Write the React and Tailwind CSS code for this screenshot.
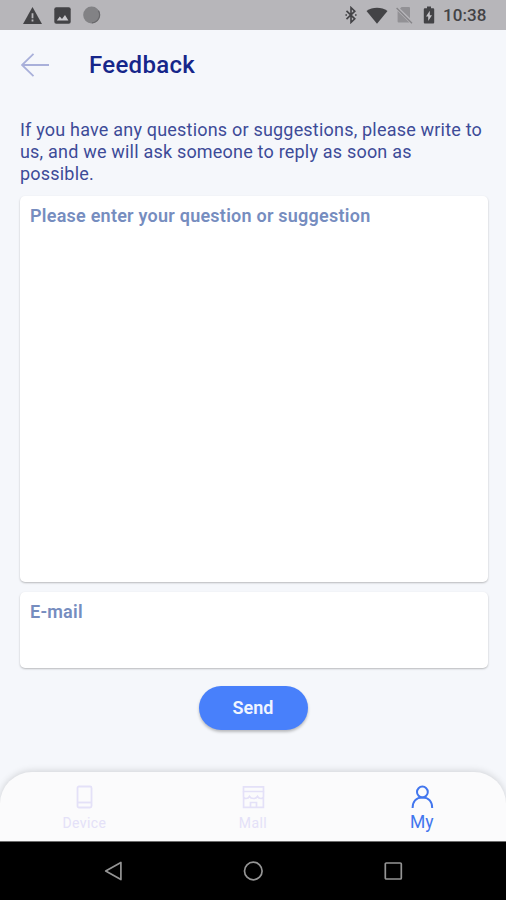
const StatusBar = () => (
  <div className="flex h-[30px] shrink-0 items-center justify-between bg-[#b7b6ba] pl-[23px] pr-[19px] text-[#434346]">
    <div className="flex items-center">
      <svg className="h-[17px] w-[19px]" viewBox="0 0 19 17" fill="currentColor">
        <path d="M9.5 0 L19 17 H0 Z" />
        <path d="M8.6 6.2h1.8v5H8.6zM8.6 12.6h1.8v1.8H8.6z" fill="#b7b6ba" />
      </svg>
      <svg className="ml-3 h-[17px] w-[17px]" viewBox="0 0 17 17">
        <rect x="0.3" y="0.3" width="16.4" height="16.4" rx="2" fill="currentColor" />
        <path d="M2.8 13.5 L5.8 9.4 L8 12 L11 8 L14.4 13.5 Z" fill="#c9c8cc" />
      </svg>
      <svg className="ml-3 h-[18px] w-[18px]" viewBox="0 0 18 18">
        <circle cx="8.6" cy="9" r="8.4" fill="#828285" />
        <path d="M15.4 4.6 A8 8 0 0 1 9 16.8" fill="none" stroke="#68686b" strokeWidth="1.2" />
      </svg>
    </div>
    <div className="flex items-center">
      <svg className="h-[18px] w-3" viewBox="0 0 12 18" fill="none" stroke="currentColor" strokeWidth="1.6">
        <path d="M1.5 4.8 L9.8 12.8 L6 16.4 V1.6 L9.8 5.2 L1.5 13.2" />
        <path d="M1.2 8.2v1.6M10.8 8.2v1.6" />
      </svg>
      <svg className="ml-[9px] h-[17px] w-[22px]" viewBox="0 0 22 17" fill="currentColor">
        <path d="M0.5 4 C6.5 -0.4 15.5 -0.4 21.5 4 L11 16.8 Z" />
      </svg>
      <svg className="ml-2 h-[18px] w-[17px]" viewBox="0 0 17 18">
        <path d="M5.6 1 H13 Q14 1 14 2 V12.2 L4 2.6 Z M1.6 5 L13.4 16.4 H2.6 Q1.6 16.4 1.6 15.4 Z" fill="#929195" />
        <path d="M0.6 2 L16 17.2" stroke="#858488" strokeWidth="1.3" />
      </svg>
      <svg className="ml-[10px] h-[18px] w-3" viewBox="0 0 12 18">
        <path d="M4 0.4h4v1.8h2.2q1 0 1 1v13.4q0 1-1 1H1.8q-1 0-1-1V3.2q0-1 1-1H4z" fill="currentColor" />
        <path d="M6.8 4.8 L3 10.6 H5.2 V15 L9 9.2 H6.8 Z" fill="#c3c2c6" />
      </svg>
      <span className="ml-2 w-[44px] pt-px whitespace-nowrap text-[17px] leading-none font-medium tracking-[0.1px]">
        10:38
      </span>
    </div>
  </div>
);

const DeviceIcon = () => (
  <svg className="h-6 w-6" viewBox="0 0 24 24" fill="none" stroke="currentColor" strokeWidth="1.8">
    <rect x="5.5" y="1.5" width="14" height="21" rx="1.5" />
    <path d="M5.5 17.5h14" />
  </svg>
);

const MallIcon = () => (
  <svg className="h-6 w-6" viewBox="0 0 24 24" fill="none" stroke="currentColor" strokeWidth="1.7">
    <path d="M2.5 1.8h20v4.7h-20z" />
    <path d="M2.5 6.5v5q0 2 2.5 2t3.5-2q1.2 2 4 2t4-2q1 2 3.5 2t2.5-2v-5" />
    <path d="M2.6 12.4v10h19.8v-10M9.5 22.4v-4.9h6v4.9" />
  </svg>
);

const MyIcon = () => (
  <svg className="h-6 w-6" viewBox="0 0 24 24" fill="none" stroke="currentColor" strokeWidth="2">
    <circle cx="12.4" cy="7" r="5.4" />
    <path d="M2.6 23 C2.6 16.4 6.4 12.4 12.4 12.4 S22.2 16.4 22.2 23" />
  </svg>
);

const tabs = [
  { name: "Device", icon: DeviceIcon },
  { name: "Mall", icon: MallIcon },
  { name: "My", icon: MyIcon, active: true },
];

const TabBar = () => (
  <nav className="grid h-[69px] shrink-0 grid-cols-3 rounded-t-[32px] bg-[#fbfbfc] shadow-[0_-1px_7px_rgba(0,0,0,0.15)]">
    {tabs.map(({ name, icon: Icon, active }) => (
      <button
        key={name}
        className={`flex flex-col items-center pt-[13px] ${active ? "text-[#4276ee]" : "text-[#e4e1f8]"}`}
      >
        <Icon />
        <span
          className={
            active
              ? "mt-[3px] text-[17.5px] leading-5"
              : "mt-1 text-[14px] leading-5 tracking-[0.4px]"
          }
        >
          {name}
        </span>
      </button>
    ))}
  </nav>
);

// Android back / home / recents buttons
const SystemNav = () => (
  <div className="flex h-[59px] shrink-0 items-center justify-center gap-[120px] border-t border-[#6d6d6d] bg-black text-[#959595]">
    <svg className="h-5 w-5" viewBox="0 0 20 20" fill="none" stroke="currentColor" strokeWidth="1.7" strokeLinejoin="round">
      <path d="M17.9 1.4v17.2L2.7 10z" />
    </svg>
    <svg className="h-5 w-5" viewBox="0 0 20 20" fill="none" stroke="currentColor" strokeWidth="1.7">
      <circle cx="10.3" cy="10" r="8.8" />
    </svg>
    <svg className="h-5 w-5" viewBox="0 0 20 20" fill="none" stroke="currentColor" strokeWidth="1.7">
      <rect x="2.3" y="2" width="16" height="16" rx="1" />
    </svg>
  </div>
);

const App = () => {
  return (
    <div className="flex h-[900px] w-[506px] flex-col overflow-hidden bg-[#f5f7fb] font-[Roboto,sans-serif]">
      <StatusBar />

      {/* Header */}
      <header className="flex h-[70px] shrink-0 items-center pl-[21px]">
        <svg className="h-6 w-7" viewBox="0 0 28 24" fill="none" stroke="#a9b0da" strokeWidth="1.8">
          <path d="M12.5 0.8 L1 12 L12.5 23.2 M1 12 H28" />
        </svg>
        <h1 className="ml-[40px] text-[24px] leading-none font-medium tracking-[0.3px] text-[#16268a]">
          Feedback
        </h1>
      </header>

      {/* Feedback form */}
      <main className="flex flex-1 flex-col pr-[18px] pl-5 pt-[19px]">
        <p className="w-full text-[18px] leading-[22px] tracking-[0.2px] text-[#3d4b98]">
          If you have any questions or suggestions, please write to
          <br />
          us, and we will ask someone to reply as soon as
          <br />
          possible.
        </p>
        <div className="mt-[11px] h-[386px] w-full rounded-[5px] bg-white px-[10px] pt-[9px] text-[18px] leading-[22px] font-semibold tracking-[0.24px] text-[#768dbf] shadow-[0_1px_2px_rgba(0,0,0,0.25)]">
          Please enter your question or suggestion
        </div>
        <div className="mt-[10px] h-[76px] w-full rounded-[5px] bg-white px-[10px] pt-[9px] text-[18px] leading-[22px] font-semibold tracking-[0.24px] text-[#768dbf] shadow-[0_1px_2px_rgba(0,0,0,0.25)]">
          E-mail
        </div>
        <button className="mt-[18px] mr-[2px] h-[44px] w-[109px] self-center rounded-full bg-[#4880fb] pb-px text-[18px] font-semibold text-[#f0f5ff] shadow-[0_2px_3px_rgba(0,0,0,0.25)]">
          Send
        </button>
      </main>

      <TabBar />
      <SystemNav />
    </div>
  );
};

export default App;
